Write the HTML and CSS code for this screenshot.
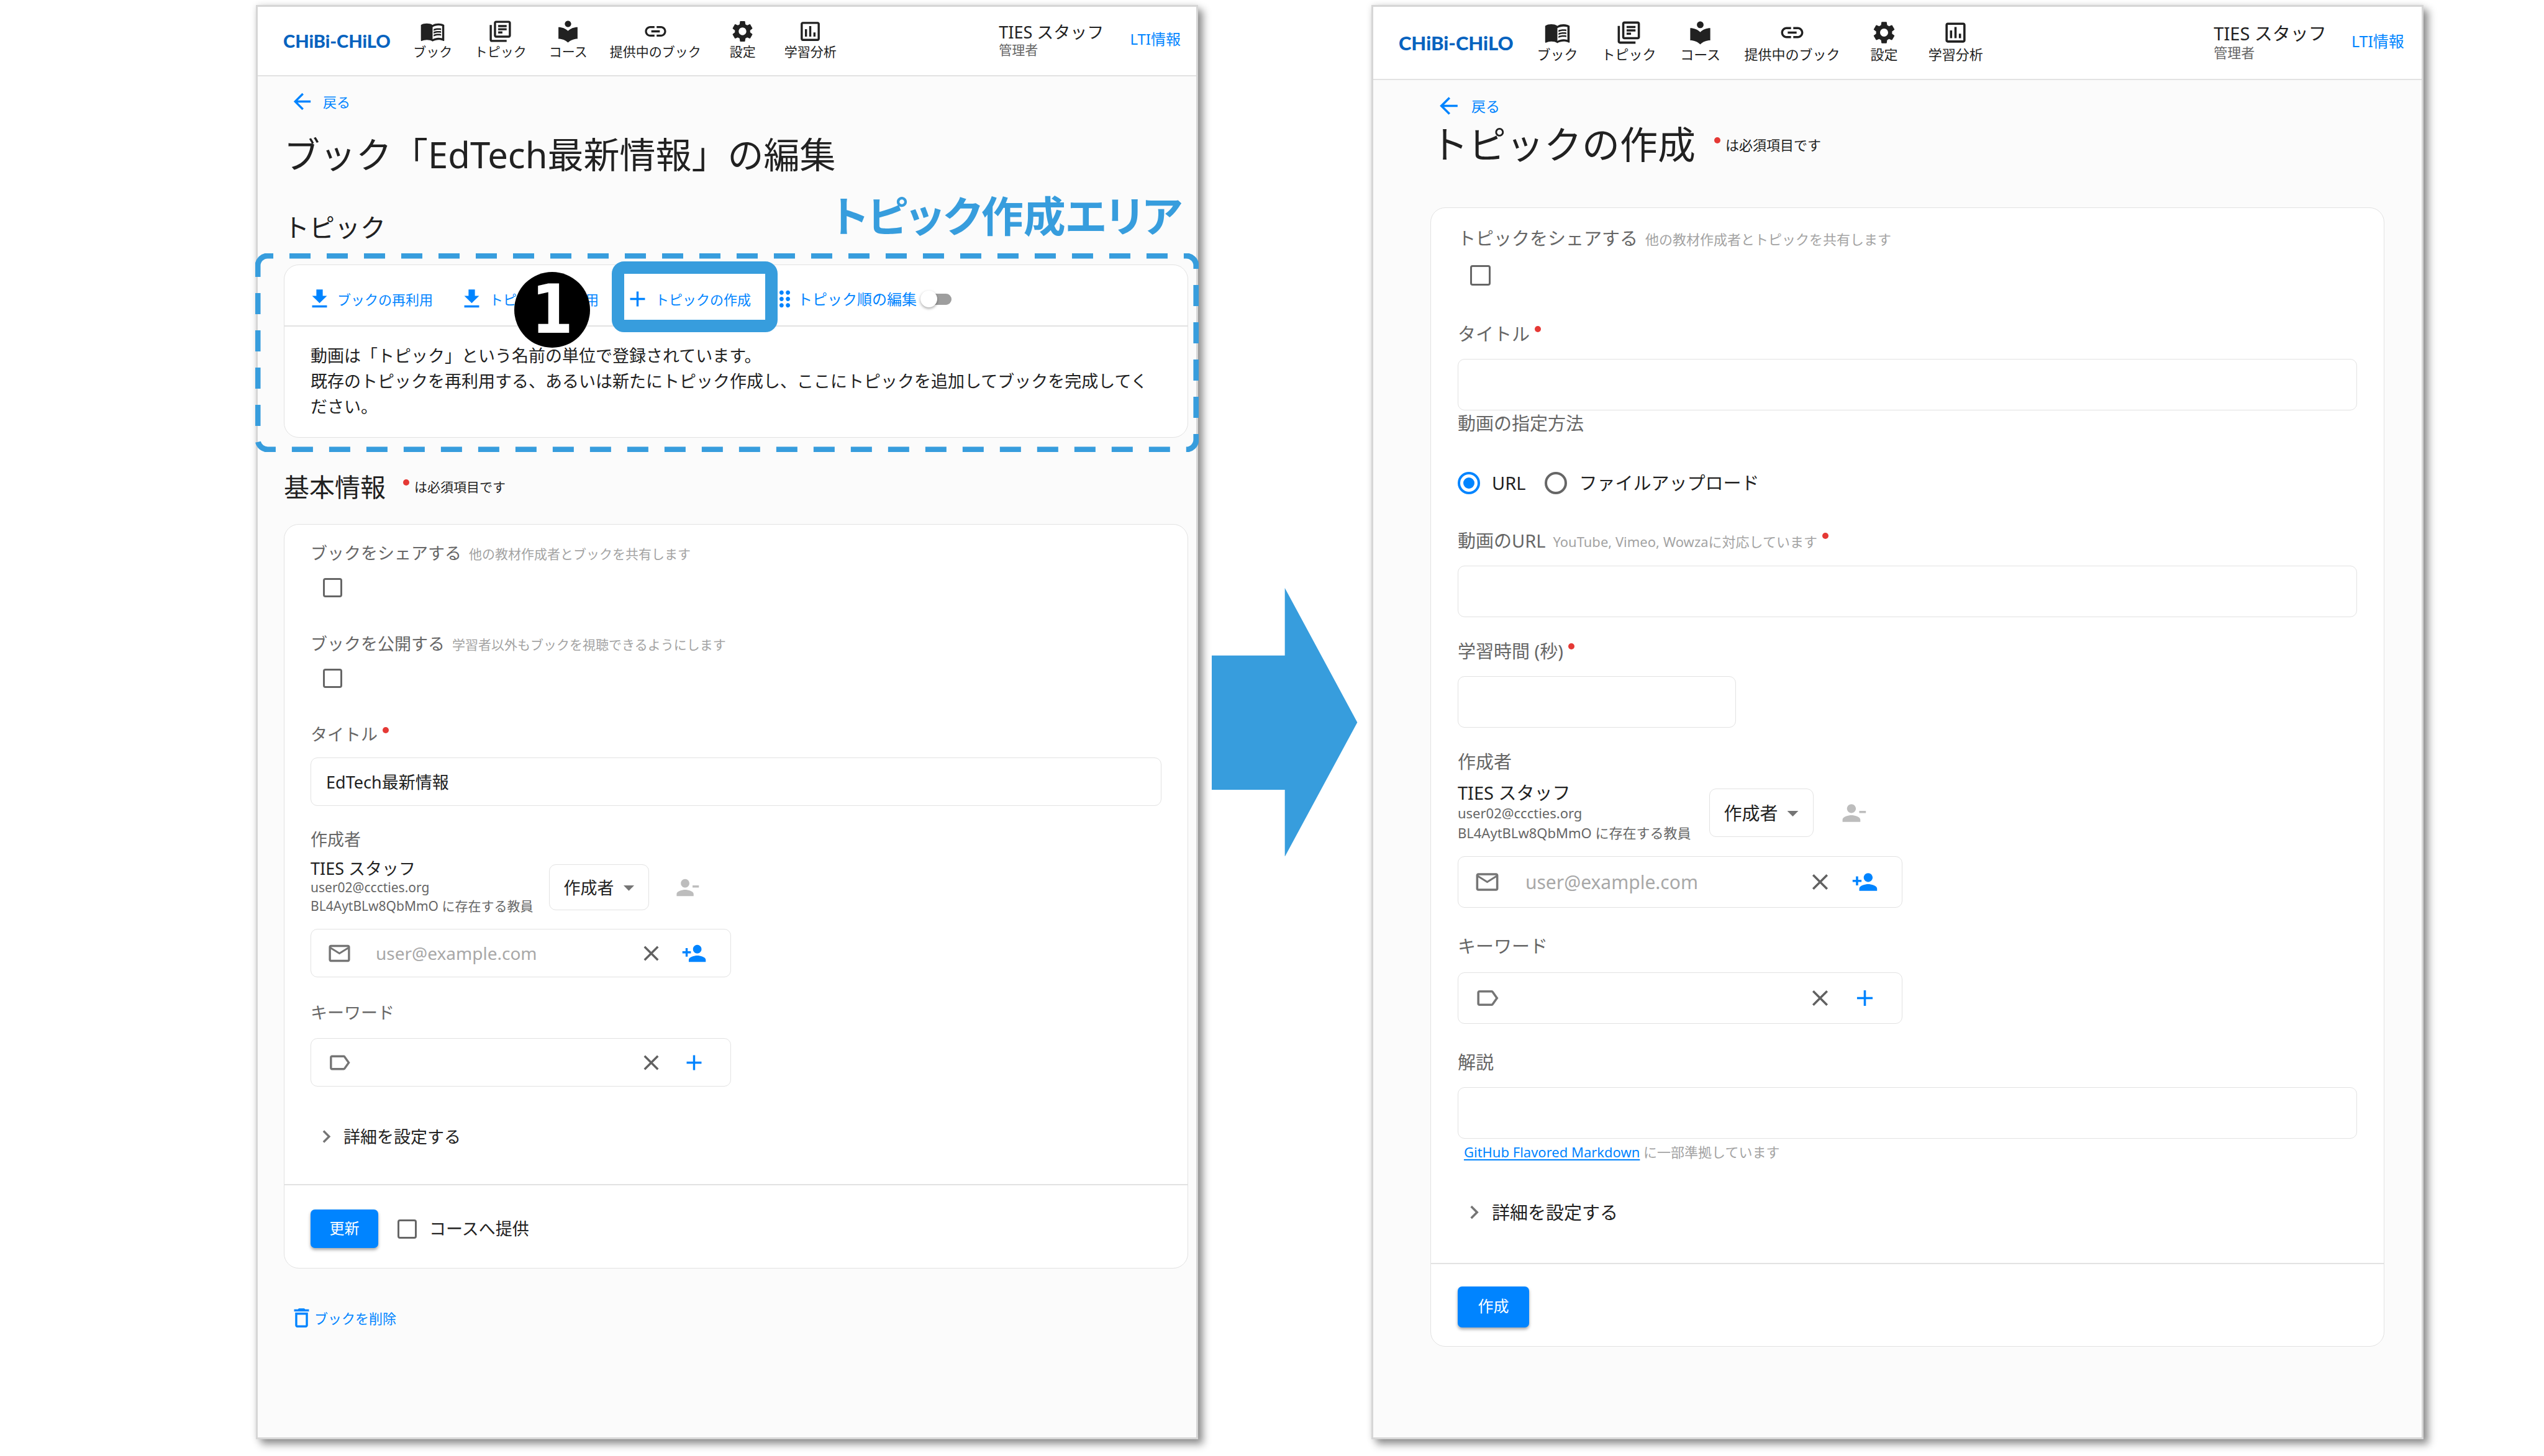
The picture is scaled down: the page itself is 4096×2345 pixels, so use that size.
FILE: index.html
```html
<!DOCTYPE html>
<html lang="ja">
<head>
<meta charset="utf-8">
<title>CHiBi-CHiLO トピックの作成手順</title>
<link rel="stylesheet" href="styles.css">
</head>
<body>
<svg class="sprite" aria-hidden="true">
  <symbol id="i-book" viewBox="0 0 24 24"><path d="M21 5c-1.11-.35-2.33-.5-3.5-.5-1.95 0-4.05.4-5.5 1.5-1.45-1.1-3.55-1.5-5.5-1.5S2.45 4.9 1 6v14.65c0 .25.25.5.5.5.1 0 .15-.05.25-.05C3.1 20.45 5.05 20 6.5 20c1.95 0 4.05.4 5.5 1.5 1.35-.85 3.8-1.5 5.5-1.5 1.65 0 3.35.3 4.75 1.05.1.05.15.05.25.05.25 0 .5-.25.5-.5V6c-.6-.45-1.25-.75-2-1zm0 13.5c-1.1-.35-2.3-.5-3.5-.5-1.7 0-4.15.65-5.5 1.5V8c1.35-.85 3.8-1.5 5.5-1.5 1.2 0 2.4.15 3.5.5v11.5z"/><path d="M17.5 10.5c.88 0 1.73.09 2.5.26V9.24c-.79-.15-1.64-.24-2.5-.24-1.7 0-3.24.29-4.5.83v1.66c1.13-.64 2.7-.99 4.5-.99zM13 12.49v1.66c1.13-.64 2.7-.99 4.5-.99.88 0 1.73.09 2.5.26V11.9c-.79-.15-1.64-.24-2.5-.24-1.7 0-3.24.3-4.5.83zM17.5 14.33c-1.7 0-3.24.29-4.5.83v1.66c1.13-.64 2.7-.99 4.5-.99.88 0 1.73.09 2.5.26v-1.52c-.79-.16-1.64-.24-2.5-.24z"/></symbol>
  <symbol id="i-topic" viewBox="0 0 24 24"><path d="M4 6H2v14c0 1.1.9 2 2 2h14v-2H4V6zm16-4H8c-1.1 0-2 .9-2 2v12c0 1.1.9 2 2 2h12c1.1 0 2-.9 2-2V4c0-1.1-.9-2-2-2zm0 14H8V4h12v12zM10 9h8v2h-8zm0 3h4v2h-4zm0-6h8v2h-8z"/></symbol>
  <symbol id="i-course" viewBox="0 0 24 24"><path d="M12 11.55C9.64 9.35 6.48 8 3 8v11c3.48 0 6.64 1.35 9 3.55 2.36-2.19 5.52-3.55 9-3.55V8c-3.48 0-6.64 1.35-9 3.55zM12 8c1.66 0 3-1.34 3-3s-1.34-3-3-3-3 1.34-3 3 1.34 3 3 3z"/></symbol>
  <symbol id="i-link" viewBox="0 0 24 24"><path d="M3.9 12c0-1.71 1.39-3.1 3.1-3.1h4V7H7c-2.76 0-5 2.24-5 5s2.24 5 5 5h4v-1.9H7c-1.71 0-3.1-1.39-3.1-3.1zM8 13h8v-2H8v2zm9-6h-4v1.9h4c1.71 0 3.1 1.39 3.1 3.1s-1.39 3.1-3.1 3.1h-4V17h4c2.76 0 5-2.24 5-5s-2.24-5-5-5z"/></symbol>
  <symbol id="i-settings" viewBox="0 0 24 24"><path d="M19.14 12.94c.04-.3.06-.61.06-.94 0-.32-.02-.64-.07-.94l2.03-1.58c.18-.14.23-.41.12-.61l-1.92-3.32c-.12-.22-.37-.29-.59-.22l-2.39.96c-.5-.38-1.03-.7-1.62-.94l-.36-2.54c-.04-.24-.24-.41-.48-.41h-3.84c-.24 0-.43.17-.47.41l-.36 2.54c-.59.24-1.13.57-1.62.94l-2.39-.96c-.22-.08-.47 0-.59.22L2.74 8.87c-.12.21-.08.47.12.61l2.03 1.58c-.05.3-.09.63-.09.94s.02.64.07.94l-2.03 1.58c-.18.14-.23.41-.12.61l1.92 3.32c.12.22.37.29.59.22l2.39-.96c.5.38 1.03.7 1.62.94l.36 2.54c.05.24.24.41.48.41h3.84c.24 0 .44-.17.47-.41l.36-2.54c.59-.24 1.13-.56 1.62-.94l2.39.96c.22.08.47 0 .59-.22l1.92-3.32c.12-.22.07-.47-.12-.61l-2.01-1.58zM12 15.6c-1.98 0-3.6-1.62-3.6-3.6s1.62-3.6 3.6-3.6 3.6 1.62 3.6 3.6-1.62 3.6-3.6 3.6z"/></symbol>
  <symbol id="i-chart" viewBox="0 0 24 24"><path d="M19 3H5c-1.1 0-2 .9-2 2v14c0 1.1.9 2 2 2h14c1.1 0 2-.9 2-2V5c0-1.1-.9-2-2-2zm0 16H5V5h14v14zM7 10h2v7H7zm4-3h2v10h-2zm4 6h2v4h-2z"/></symbol>
  <symbol id="i-back" viewBox="0 0 24 24"><path d="M20 11H7.83l5.59-5.59L12 4l-8 8 8 8 1.41-1.41L7.83 13H20v-2z"/></symbol>
  <symbol id="i-import" viewBox="0 0 24 24"><path d="M19 9h-4V3H9v6H5l7 7 7-7zM5 18v2h14v-2H5z"/></symbol>
  <symbol id="i-add" viewBox="0 0 24 24"><path d="M19 13h-6v6h-2v-6H5v-2h6V5h2v6h6v2z"/></symbol>
  <symbol id="i-drag" viewBox="0 0 24 24"><path d="M11 18c0 1.1-.9 2-2 2s-2-.9-2-2 .9-2 2-2 2 .9 2 2zm-2-8c-1.1 0-2 .9-2 2s.9 2 2 2 2-.9 2-2-.9-2-2-2zm0-6c-1.1 0-2 .9-2 2s.9 2 2 2 2-.9 2-2-.9-2-2-2zm6 4c1.1 0 2-.9 2-2s-.9-2-2-2-2 .9-2 2 .9 2 2 2zm0 2c-1.1 0-2 .9-2 2s.9 2 2 2 2-.9 2-2-.9-2-2-2zm0 6c-1.1 0-2 .9-2 2s.9 2 2 2 2-.9 2-2-.9-2-2-2z"/></symbol>
  <symbol id="i-delete" viewBox="0 0 24 24"><path d="M6 19c0 1.1.9 2 2 2h8c1.1 0 2-.9 2-2V7H6v12zM8 9h8v10H8V9zm7.5-5l-1-1h-5l-1 1H5v2h14V4z"/></symbol>
  <symbol id="i-mail" viewBox="0 0 24 24"><path d="M20 4H4c-1.1 0-1.99.9-1.99 2L2 18c0 1.1.9 2 2 2h16c1.1 0 2-.9 2-2V6c0-1.1-.9-2-2-2zm0 14H4V8l8 5 8-5v10zm-8-7L4 6h16l-8 5z"/></symbol>
  <symbol id="i-label" viewBox="0 0 24 24"><path d="M17.63 5.84C17.27 5.33 16.67 5 16 5L5 5.01C3.9 5.01 3 5.9 3 7v10c0 1.1.9 1.99 2 1.99L16 19c.67 0 1.27-.33 1.63-.84L22 12l-4.37-6.16zM16 17H5V7h11l3.55 5L16 17z"/></symbol>
  <symbol id="i-close" viewBox="0 0 24 24"><path d="M19 6.41L17.59 5 12 10.59 6.41 5 5 6.41 10.59 12 5 17.59 6.41 19 12 13.41 17.59 19 19 17.59 13.41 12z"/></symbol>
  <symbol id="i-person-add" viewBox="0 0 24 24"><path d="M15 12c2.21 0 4-1.79 4-4s-1.79-4-4-4-4 1.79-4 4 1.79 4 4 4zm-9-2V7H4v3H1v2h3v3h2v-3h3v-2H6zm9 4c-2.67 0-8 1.34-8 4v2h16v-2c0-2.66-5.33-4-8-4z"/></symbol>
  <symbol id="i-person-remove" viewBox="0 0 24 24"><path d="M14 8c0-2.21-1.79-4-4-4S6 5.79 6 8s1.79 4 4 4 4-1.79 4-4zm3 2v2h6v-2h-6zM2 18v2h16v-2c0-2.66-5.33-4-8-4s-8 1.34-8 4z"/></symbol>
  <symbol id="i-chevron" viewBox="0 0 24 24"><path d="M10 6L8.59 7.41 13.17 12l-4.58 4.59L10 18l6-6z"/></symbol>
  <symbol id="i-dropdown" viewBox="0 0 24 24"><path d="M7 10l5 5 5-5z"/></symbol>
</svg>

<div class="slide">
  <section class="panel panel--book">
    <header class="appbar">
      <a class="logo" href="#">CHiBi-CHiLO</a>
      <nav class="nav">
        <a class="nav__item" href="#"><svg class="icon"><use href="#i-book"/></svg>ブック</a>
        <a class="nav__item" href="#"><svg class="icon"><use href="#i-topic"/></svg>トピック</a>
        <a class="nav__item" href="#"><svg class="icon"><use href="#i-course"/></svg>コース</a>
        <a class="nav__item" href="#"><svg class="icon"><use href="#i-link"/></svg>提供中のブック</a>
        <a class="nav__item" href="#"><svg class="icon"><use href="#i-settings"/></svg>設定</a>
        <a class="nav__item" href="#"><svg class="icon"><use href="#i-chart"/></svg>学習分析</a>
      </nav>
      <div class="account"><span class="account__name">TIES スタッフ</span><span class="account__role">管理者</span></div>
      <a class="lti" href="#">LTI情報</a>
    </header>
    <main class="main">
      <a class="back" href="#"><svg class="icon"><use href="#i-back"/></svg>戻る</a>
      <h1 class="title">ブック「EdTech最新情報」の編集</h1>
      <section class="topics">
        <h2 class="heading">トピック</h2>
        <div class="card">
          <div class="toolbar">
            <button class="tool" type="button"><svg class="icon"><use href="#i-import"/></svg>ブックの再利用</button>
            <button class="tool" type="button"><svg class="icon"><use href="#i-import"/></svg>トピックの再利用</button>
            <button class="tool tool--marked" type="button"><svg class="icon"><use href="#i-add"/></svg>トピックの作成</button>
            <label class="sort"><svg class="icon"><use href="#i-drag"/></svg>トピック順の編集<input class="switch" type="checkbox" role="switch"></label>
          </div>
          <p class="note">動画は「トピック」という名前の単位で登録されています。<br>既存のトピックを再利用する、あるいは新たにトピック作成し、ここにトピックを追加してブックを完成してください。</p>
        </div>
        <svg class="area" viewBox="0 0 1519 320" preserveAspectRatio="none" aria-hidden="true"><path d="M4 20a16 16 0 0 1 16-16H1499a16 16 0 0 1 16 16V300a16 16 0 0 1-16 16H20a16 16 0 0 1-16-16Z"/></svg>
        <p class="area-title">トピック作成エリア</p>
        <span class="step">1</span>
      </section>
      <div class="heading-row">
        <h2 class="heading">基本情報</h2>
        <p class="required-note"><i class="dot"></i>は必須項目です</p>
      </div>
      <form class="card">
        <div class="fields">
          <div class="field">
            <label class="label" for="b-share">ブックをシェアする<small class="hint">他の教材作成者とブックを共有します</small></label>
            <div class="check-row"><input class="check" id="b-share" type="checkbox"></div>
          </div>
          <div class="field">
            <label class="label" for="b-public">ブックを公開する<small class="hint">学習者以外もブックを視聴できるようにします</small></label>
            <div class="check-row"><input class="check" id="b-public" type="checkbox"></div>
          </div>
          <div class="field">
            <label class="label" for="b-title">タイトル<i class="dot"></i></label>
            <input class="input" id="b-title" type="text" value="EdTech最新情報">
          </div>
          <div class="field">
            <label class="label" for="b-mail">作成者</label>
            <div class="author">
              <div class="author__info"><span class="author__name">TIES スタッフ</span><span>user02@cccties.org</span><span>BL4AytBLw8QbMmO に存在する教員</span></div>
              <div class="role"><select class="role__select" aria-label="役割"><option>作成者</option></select><svg class="icon"><use href="#i-dropdown"/></svg></div>
              <button class="icon-button icon-button--off" type="button" aria-label="作成者を外す"><svg class="icon"><use href="#i-person-remove"/></svg></button>
            </div>
            <div class="combo">
              <svg class="icon"><use href="#i-mail"/></svg>
              <input class="combo__input" id="b-mail" type="email" placeholder="user@example.com">
              <button class="icon-button" type="button" aria-label="消去"><svg class="icon"><use href="#i-close"/></svg></button>
              <button class="icon-button icon-button--primary" type="button" aria-label="作成者を追加"><svg class="icon"><use href="#i-person-add"/></svg></button>
            </div>
          </div>
          <div class="field field--keyword">
            <label class="label" for="b-keyword">キーワード</label>
            <div class="combo">
              <svg class="icon"><use href="#i-label"/></svg>
              <input class="combo__input" id="b-keyword" type="text">
              <button class="icon-button" type="button" aria-label="消去"><svg class="icon"><use href="#i-close"/></svg></button>
              <button class="icon-button icon-button--primary" type="button" aria-label="キーワードを追加"><svg class="icon"><use href="#i-add"/></svg></button>
            </div>
          </div>
          <button class="details" type="button"><svg class="icon"><use href="#i-chevron"/></svg>詳細を設定する</button>
        </div>
        <div class="actions">
          <button class="submit" type="submit">更新</button>
          <label class="option"><input class="check" type="checkbox">コースへ提供</label>
        </div>
      </form>
      <button class="delete" type="button"><svg class="icon"><use href="#i-delete"/></svg>ブックを削除</button>
    </main>
  </section>

  <svg class="arrow" viewBox="0 0 235 434" aria-hidden="true"><path d="M0 109H118V0L235 217 118 434V326H0Z"/></svg>

  <section class="panel panel--topic">
    <header class="appbar">
      <a class="logo" href="#">CHiBi-CHiLO</a>
      <nav class="nav">
        <a class="nav__item" href="#"><svg class="icon"><use href="#i-book"/></svg>ブック</a>
        <a class="nav__item" href="#"><svg class="icon"><use href="#i-topic"/></svg>トピック</a>
        <a class="nav__item" href="#"><svg class="icon"><use href="#i-course"/></svg>コース</a>
        <a class="nav__item" href="#"><svg class="icon"><use href="#i-link"/></svg>提供中のブック</a>
        <a class="nav__item" href="#"><svg class="icon"><use href="#i-settings"/></svg>設定</a>
        <a class="nav__item" href="#"><svg class="icon"><use href="#i-chart"/></svg>学習分析</a>
      </nav>
      <div class="account"><span class="account__name">TIES スタッフ</span><span class="account__role">管理者</span></div>
      <a class="lti" href="#">LTI情報</a>
    </header>
    <main class="main">
      <a class="back" href="#"><svg class="icon"><use href="#i-back"/></svg>戻る</a>
      <div class="heading-row">
        <h1 class="title">トピックの作成</h1>
        <p class="required-note"><i class="dot"></i>は必須項目です</p>
      </div>
      <form class="card">
        <div class="fields">
          <div class="field">
            <label class="label" for="t-share">トピックをシェアする<small class="hint">他の教材作成者とトピックを共有します</small></label>
            <div class="check-row"><input class="check" id="t-share" type="checkbox"></div>
          </div>
          <div class="field">
            <label class="label" for="t-title">タイトル<i class="dot"></i></label>
            <input class="input" id="t-title" type="text">
          </div>
          <fieldset class="source">
            <legend class="label">動画の指定方法</legend>
            <div class="source__options">
              <label class="option"><input class="radio" type="radio" name="source" checked>URL</label>
              <label class="option"><input class="radio" type="radio" name="source">ファイルアップロード</label>
            </div>
          </fieldset>
          <div class="field field--url">
            <label class="label" for="t-url">動画のURL<small class="hint">YouTube, Vimeo, Wowzaに対応しています</small><i class="dot"></i></label>
            <input class="input" id="t-url" type="url">
          </div>
          <div class="field">
            <label class="label" for="t-time">学習時間 (秒)<i class="dot"></i></label>
            <input class="input input--short" id="t-time" type="text" inputmode="numeric">
          </div>
          <div class="field">
            <label class="label" for="t-mail">作成者</label>
            <div class="author">
              <div class="author__info"><span class="author__name">TIES スタッフ</span><span>user02@cccties.org</span><span>BL4AytBLw8QbMmO に存在する教員</span></div>
              <div class="role"><select class="role__select" aria-label="役割"><option>作成者</option></select><svg class="icon"><use href="#i-dropdown"/></svg></div>
              <button class="icon-button icon-button--off" type="button" aria-label="作成者を外す"><svg class="icon"><use href="#i-person-remove"/></svg></button>
            </div>
            <div class="combo">
              <svg class="icon"><use href="#i-mail"/></svg>
              <input class="combo__input" id="t-mail" type="email" placeholder="user@example.com">
              <button class="icon-button" type="button" aria-label="消去"><svg class="icon"><use href="#i-close"/></svg></button>
              <button class="icon-button icon-button--primary" type="button" aria-label="作成者を追加"><svg class="icon"><use href="#i-person-add"/></svg></button>
            </div>
          </div>
          <div class="field field--keyword">
            <label class="label" for="t-keyword">キーワード</label>
            <div class="combo">
              <svg class="icon"><use href="#i-label"/></svg>
              <input class="combo__input" id="t-keyword" type="text">
              <button class="icon-button" type="button" aria-label="消去"><svg class="icon"><use href="#i-close"/></svg></button>
              <button class="icon-button icon-button--primary" type="button" aria-label="キーワードを追加"><svg class="icon"><use href="#i-add"/></svg></button>
            </div>
          </div>
          <div class="field field--keyword">
            <label class="label" for="t-text">解説</label>
            <textarea class="input" id="t-text" rows="1"></textarea>
            <p class="help"><a class="help__link" href="#">GitHub Flavored Markdown</a> に一部準拠しています</p>
          </div>
          <button class="details" type="button"><svg class="icon"><use href="#i-chevron"/></svg>詳細を設定する</button>
        </div>
        <div class="actions">
          <button class="submit" type="submit">作成</button>
        </div>
      </form>
    </main>
  </section>
</div>
</body>
</html>
```
FILE: styles.css
```css
*, *::before, *::after { box-sizing: border-box; }

:root {
  --ink: #212121;
  --muted: #666;
  --faint: #a3a3a3;
  --line: #e2e2e2;
  --primary: #0084ff;
  --callout: #379ddd;
}

body {
  margin: 0;
  background: #fff;
  color: var(--ink);
  font-family: "Noto Sans", "Noto Sans CJK JP", sans-serif;
}

h1, h2, p, fieldset, legend { margin: 0; padding: 0; border: 0; font-weight: 400; }
a { color: inherit; text-decoration: none; }
button, input, select, textarea { margin: 0; padding: 0; border: 0; background: none; color: inherit; font: inherit; }
button { cursor: pointer; }

.sprite { display: none; }

.slide {
  display: grid;
  grid-template-columns: 1517fr 279fr 1694fr;
  min-height: 100vh;
  padding: 8px 4.74% 27px 10.06%;
}

/* The two screens share one layout; each sets its own zoom. */
.panel--book {
  --fs-title: 58px; --lh-title: 80px;
  --fs: 27px; --fs-small: 21px; --fs-back: 22px; --fs-button: 24px; --fs-logo: 29px; --fs-mail: 28px;
  --icon: 41px; --nav-min: 64px; --nav-gap: 35px; --nav-lh: 24px; --nav-start: 36px;
  --appbar: 112px; --appbar-end: 25px; --account-lh: 28px; --account-gap: 42px;
  --main-pad: 20px 13px 0 42px; --back-gap: 13px; --back-start: 9px;
  --pad: 42px; --fields-top: 26px;
  --label: 39px; --check-row: 73px; --check: 31px; --gap: 34px; --gap-keyword: 37px;
  --label-input: 18px; --field-h: 78px; --combo: 677px; --author-top: 13px;
  --author-lh: 30px; --author-gap: 26px; --select-h: 74px; --select-w: 161px;
  --combo-text: 38px; --combo-gap: 28px;
  --details-top: 60px; --details-bottom: 56px;
  --submit-w: 109px; --submit-h: 62px; --actions: 39px 42px 32px; --note-gap: 28px;
}
.panel--topic {
  --fs-title: 61px; --lh-title: 82px;
  --fs: 29px; --fs-small: 22px; --fs-back: 23px; --fs-button: 25px; --fs-logo: 31px; --fs-mail: 30px;
  --icon: 43px; --nav-min: 68px; --nav-gap: 37px; --nav-lh: 26px; --nav-start: 37px;
  --appbar: 118px; --appbar-end: 28px; --account-lh: 30px; --account-gap: 40px;
  --main-pad: 20px 60px 0 92px; --back-gap: 15px; --back-start: 8px;
  --pad: 43px; --fields-top: 28px;
  --label: 41px; --check-row: 79px; --check: 33px; --gap: 34px; --gap-keyword: 41px;
  --label-input: 20px; --field-h: 83px; --combo: 716px; --author-top: 14px;
  --author-lh: 32px; --author-gap: 30px; --select-h: 78px; --select-w: 168px;
  --combo-text: 40px; --combo-gap: 29px;
  --details-top: 60px; --details-bottom: 60px;
  --submit-w: 115px; --submit-h: 66px; --actions: 36px 43px 30px; --note-gap: 30px;
}

.panel {
  display: flex;
  flex-direction: column;
  border: 3px solid #d6d6d6;
  background: #fbfbfb;
  box-shadow: 8px 8px 12px rgba(0, 0, 0, .42), 0 0 10px rgba(0, 0, 0, .1);
  font-size: var(--fs);
}
.panel--book { grid-column: 1; }
.panel--topic { grid-column: 3; }

.icon { flex: none; display: block; width: var(--icon); height: var(--icon); fill: currentColor; }

/* App bar */
.appbar {
  display: flex;
  align-items: center;
  height: var(--appbar);
  padding: 0 var(--appbar-end) 0 41px;
  border-bottom: 2px solid var(--line);
  background: #fff;
}
.logo { color: #0763bf; font-family: Lato, sans-serif; font-size: var(--fs-logo); font-weight: 900; line-height: 40px; }
.nav { display: flex; gap: var(--nav-gap); margin-left: var(--nav-start); padding-bottom: 8px; }
.nav__item {
  display: flex;
  flex-direction: column;
  align-items: center;
  min-width: var(--nav-min);
  font-size: var(--fs-small);
  line-height: var(--nav-lh);
  white-space: nowrap;
}
.account { display: flex; flex-direction: column; margin-left: auto; line-height: var(--account-lh); white-space: nowrap; }
.account__role { color: var(--muted); font-size: var(--fs-small); }
.lti { margin-left: var(--account-gap); padding-bottom: 6px; color: var(--primary); font-size: var(--fs-button); line-height: 32px; }

.main { padding: var(--main-pad); }
.back {
  display: flex;
  align-items: center;
  gap: var(--back-gap);
  width: max-content;
  margin-left: var(--back-start);
  color: var(--primary);
  font-size: var(--fs-back);
  line-height: 32px;
}
.title { font-size: var(--fs-title); line-height: var(--lh-title); }
.panel--book .title { margin-top: 25px; }
.heading { font-size: 41px; line-height: 56px; }
.heading-row { display: flex; align-items: center; gap: var(--note-gap); }
.panel--book .heading-row { margin-top: 51px; }
.required-note { display: flex; gap: 8px; font-size: var(--fs-small); line-height: 32px; }
.dot { flex: none; width: 10px; height: 10px; border-radius: 5px; background: #e53935; }
.required-note .dot { margin-top: 4px; }

.card { margin-top: 32px; border: 1px solid var(--line); border-radius: 24px; background: #fff; }
.panel--topic .card { margin-top: 60px; }

/* Topic tools */
.topics { position: relative; margin-top: 49px; }
.toolbar {
  display: flex;
  align-items: center;
  padding: 34px 36px 22px;
  border-bottom: 2px solid var(--line);
  color: var(--primary);
  line-height: 32px;
  white-space: nowrap;
}
.tool { display: flex; align-items: center; gap: 8px; margin-right: 42px; font-size: 22px; }
.tool--marked { position: relative; margin-right: 34px; }
.tool--marked::after {
  content: "";
  position: absolute;
  inset: -40px -43px -33px -21px;
  border: 20px solid var(--callout);
  border-radius: 20px;
}
.sort { display: flex; align-items: center; font-size: var(--fs-button); }
.switch {
  appearance: none;
  width: 44px;
  height: 18px;
  margin-left: 12px;
  border-radius: 9px;
  background: #9e9e9e;
}
.switch::before {
  content: "";
  display: block;
  width: 27px;
  height: 27px;
  margin: -5px 0 0 -6px;
  border-radius: 50%;
  background: #fff;
  box-shadow: 0 2px 4px rgba(0, 0, 0, .35);
}
.note { padding: 26px 42px 29px; line-height: 41px; }

/* Callouts laid over the screen */
.area {
  position: absolute;
  top: 70px;
  left: -46px;
  width: calc(100% + 63px);
  height: 320px;
  fill: none;
  stroke: var(--callout);
  stroke-width: 9px;
  stroke-dasharray: 34 26;
}
.area-title {
  position: absolute;
  top: -40px;
  right: 10px;
  color: var(--callout);
  font-size: 68px;
  font-weight: 700;
  font-feature-settings: "palt";
  line-height: 100px;
  white-space: nowrap;
}
.step {
  position: absolute;
  top: 100px;
  left: 371px;
  width: 122px;
  height: 122px;
  border-radius: 50%;
  background: #000;
  color: #fff;
  font-family: "DejaVu Sans Condensed", "DejaVu Sans", sans-serif;
  font-size: 108px;
  font-weight: 700;
  line-height: 122px;
  text-align: center;
}
.arrow { grid-column: 2; grid-row: 1; place-self: center; width: 84%; fill: var(--callout); }

/* Forms */
.fields { padding: var(--fields-top) var(--pad) var(--details-bottom); }
.field + .field, .source + .field { margin-top: var(--gap); }
.field + .field--keyword { margin-top: var(--gap-keyword); }
.label { display: flex; width: max-content; height: var(--label); color: var(--muted); line-height: var(--label); }
.label .dot { margin: 8px 0 0 8px; }
.hint { margin-left: 12px; padding-top: 2px; color: var(--faint); font-size: var(--fs-small); }

.check-row { display: flex; align-items: center; height: var(--check-row); padding-left: 20px; }
.check {
  appearance: none;
  flex: none;
  width: var(--check);
  height: var(--check);
  border: 3px solid var(--muted);
  border-radius: 4px;
}
.input {
  display: block;
  width: 100%;
  height: var(--field-h);
  margin-top: var(--label-input);
  padding: 0 24px 2px;
  border: 1px solid var(--line);
  border-radius: 11px;
  resize: none;
}
.input--short { width: 448px; }

.author { display: flex; align-items: center; margin-top: var(--author-top); }
.author__info { display: flex; flex-direction: column; color: var(--muted); font-size: var(--fs-small); line-height: var(--author-lh); white-space: nowrap; }
.author__name { color: var(--ink); font-size: var(--fs); }
.role {
  display: flex;
  align-items: center;
  justify-content: space-between;
  width: var(--select-w);
  height: var(--select-h);
  margin: 0 var(--icon) 0 var(--author-gap);
  padding: 0 11px 0 22px;
  border: 1px solid var(--line);
  border-radius: 11px;
}
.role__select { appearance: none; flex: none; }
.role .icon { color: #757575; }
.icon-button { flex: none; color: #616161; }
.icon-button--off { color: #bdbdbd; }
.icon-button--primary { color: var(--primary); margin-left: var(--combo-gap); }

.combo {
  display: flex;
  align-items: center;
  width: var(--combo);
  max-width: 100%;
  height: var(--field-h);
  margin-top: 22px;
  padding: 0 38px 0 25px;
  border: 1px solid var(--line);
  border-radius: 11px;
}
.combo > .icon { color: #757575; }
.combo__input { flex: 1; min-width: 0; margin-left: var(--combo-text); font-size: var(--fs-mail); }
.combo__input::placeholder { color: #a8a8a8; opacity: 1; }

.source__options { display: flex; gap: 31px; padding: 54px 0 16px; }
.option { display: flex; align-items: center; gap: 19px; line-height: 44px; }
.radio {
  appearance: none;
  width: 36px;
  height: 36px;
  padding: 5px;
  border: 4px solid var(--muted);
  border-radius: 50%;
}
.radio:checked { border-color: var(--primary); background: var(--primary) content-box; }

.help { margin-top: 5px; padding-left: 10px; color: var(--faint); font-size: var(--fs-small); line-height: 32px; }
.help__link { color: var(--primary); text-decoration: underline; text-underline-offset: 3px; }

.details { display: flex; align-items: center; gap: 7px; margin: var(--details-top) 0 0 5px; line-height: var(--icon); }
.details .icon { color: #757575; }
.actions { display: flex; align-items: center; gap: 31px; padding: var(--actions); border-top: 2px solid var(--line); }
.actions .option { gap: 20px; }
.submit {
  width: var(--submit-w);
  height: var(--submit-h);
  padding-bottom: 6px;
  border-radius: 7px;
  background: var(--primary);
  box-shadow: 0 3px 5px rgba(0, 0, 0, .35);
  color: #fff;
  font-size: var(--fs-button);
}
.delete { display: flex; align-items: center; margin: 59px 0 0 8px; color: var(--primary); font-size: var(--fs-back); line-height: 32px; }
```
